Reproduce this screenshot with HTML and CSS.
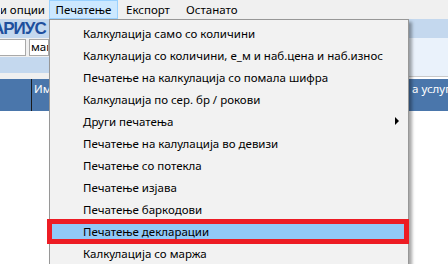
FILE: index.html
```html
<!DOCTYPE html>
<html>
<head>
<meta name="viewport" content="width=device-width, initial-scale=1">
<title>Печатење</title>
<link rel="stylesheet" href="styles.css">
</head>
<body>

<div class="menubar">
  <span class="mb-item first">и опции</span>
  <span class="mb-item open">Печатење</span>
  <span class="mb-item">Експорт</span>
  <span class="mb-item">Останато</span>
</div>

<div class="app">
  <div class="top">
    <div class="left-pane">
      <div class="title-band"><span class="brand">АРИУС</span></div>
      <div class="field-band">
        <span class="box b1"></span>
        <span class="box b2">маг</span>
      </div>
      <div class="tab-band"></div>
    </div>
    <div class="right-pane">
      <div class="title-band"></div>
      <div class="light-band"></div>
    </div>
  </div>

  <div class="grid-head">
    <span class="col c1"></span>
    <span class="col c2">Им</span>
    <span class="col c3">а услуга</span>
  </div>
  <div class="grid-body"></div>
</div>

<!-- open drop-down of the Печатење menu -->
<div class="popup">
  <div class="item">Калкулација само со количини</div>
  <div class="item">Калкулација со количини, е_м и наб.цена и наб.износ</div>
  <div class="item">Печатење на калкулација со помала шифра</div>
  <div class="item">Калкулација по сер. бр / рокови</div>
  <div class="item sub">Други печатења<span class="arrow"></span></div>
  <div class="item">Печатење на калулација во девизи</div>
  <div class="item">Печатење со потекла</div>
  <div class="item">Печатење изјава</div>
  <div class="item">Печатење баркодови</div>
  <div class="item hot">Печатење декларации</div>
  <div class="item">Калкулација со маржа</div>
</div>

</body>
</html>
```

FILE: styles.css
```css
body {
  margin: 0;
  font-family: "Noto Sans", "DejaVu Sans", sans-serif;
  font-size: 11.5px;
  color: #000;
  background: #fff;
  width: 448px;
  height: 264px;
  overflow: hidden;
  position: relative;
}

/* Menu bar */
.menubar {
  display: flex;
  height: 19px;
  background-color: #f0f0f0;
  line-height: 18px;
  white-space: nowrap;
}

.mb-item {
  flex-shrink: 0;
  padding: 0 7px;
  height: 19px;
  box-sizing: border-box;
  border: 1px solid transparent;
}

.mb-item.first {
  display: flex;
  justify-content: flex-end;
  width: 49px;
  padding: 0 3px 0 0;
  overflow: hidden;
}

.mb-item.open {
  width: 69px;
  padding: 0;
  text-align: center;
  background-color: #cce8ff;
  border-color: #99d1ff;
}

/* Window behind the menu */
.top {
  display: flex;
  height: 60px;
}

.left-pane {
  width: 49px;
  background-color: #f0f0f0;
}

.right-pane {
  flex: 1;
}

.title-band {
  height: 19px;
  background-color: #c4d8ee;
  overflow: hidden;
}

.brand {
  display: block;
  margin-left: -8px;
  font-family: "Liberation Sans", Arial, sans-serif;
  font-weight: bold;
  font-size: 17px;
  letter-spacing: -1px;
  line-height: 19px;
  color: #1e4f9d;
  white-space: nowrap;
}

.field-band {
  display: flex;
  gap: 3px;
  height: 19px;
  padding-top: 1px;
  box-sizing: border-box;
  background-color: #f0f0f0;
}

.box {
  height: 17px;
  box-sizing: border-box;
  border: 1px solid #a9a9a9;
  background-color: #fff;
  line-height: 14px;
  padding-left: 1px;
  overflow: hidden;
}

.b1 { width: 27px; margin-left: -1px; }
.b2 { flex: 1; }

.tab-band {
  height: 16px;
  background-color: #c4d8ee;
}

.light-band {
  height: 38px;
  background-color: #eaf2fb;
  border-bottom: 1px solid #c9c9c9;
}

.grid-head {
  display: flex;
  height: 32px;
  background-color: #4a76ab;
  color: #fff;
  line-height: 20px;
}

.col {
  height: 32px;
  padding-left: 2px;
}

.c1 {
  width: 29px;
  border-right: 1px solid #1a1a1a;
}

.c2 { flex: 1; }

.c3 { width: 36px; white-space: nowrap; overflow: hidden; }

.grid-body {
  height: 153px;
  background-color: #fff;
}

/* Drop-down */
.popup {
  position: absolute;
  left: 49px;
  top: 19px;
  width: 360px;
  height: 248px;
  box-sizing: border-box;
  padding-top: 2px;
  background-color: #f2f2f2;
  border: 1px solid #979797;
  box-shadow: 3px 3px 3px rgba(0, 0, 0, 0.35);
}

.item {
  position: relative;
  display: flex;
  align-items: center;
  height: 22px;
  margin: 0 4px 0 2px;
  padding-left: 31px;
  white-space: nowrap;
}

.arrow {
  margin-left: auto;
  margin-right: 5px;
  width: 0;
  height: 0;
  border-left: 4px solid #000;
  border-top: 4px solid transparent;
  border-bottom: 4px solid transparent;
}

.item.hot {
  background-color: #91c9f7;
}

/* red marker drawn over the highlighted entry */
.item.hot:after {
  content: "";
  position: absolute;
  top: -1px;
  bottom: -2px;
  left: -5px;
  right: -5px;
  border: 5px solid #ed1c24;
}
```
